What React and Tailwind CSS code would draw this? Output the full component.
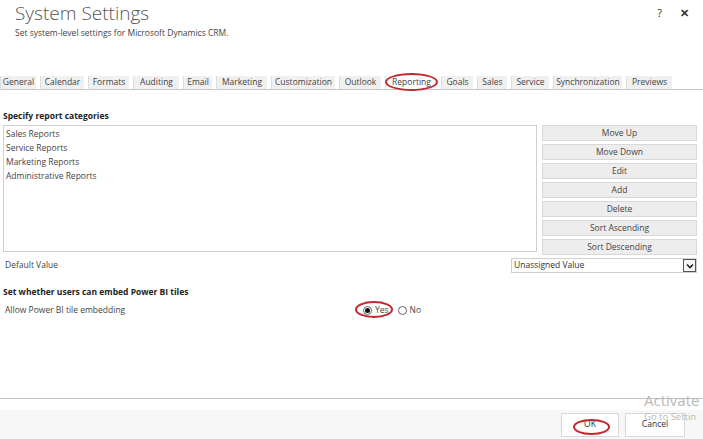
import React from 'react';

const font = { fontFamily: '"Open Sans", "Noto Sans", sans-serif' };

// tab widths measured from the reference
const tabs = [
  { label: 'General', w: 'w-[36px]' },
  { label: 'Calendar', w: 'w-[44px]' },
  { label: 'Formats', w: 'w-[41px]' },
  { label: 'Auditing', w: 'w-[46px]' },
  { label: 'Email', w: 'w-[29px]' },
  { label: 'Marketing', w: 'w-[51px]' },
  { label: 'Customization', w: 'w-[64px]' },
  { label: 'Outlook', w: 'w-[42px]' },
  { label: 'Reporting', w: 'w-[52px]', active: true },
  { label: 'Goals', w: 'w-[32px]' },
  { label: 'Sales', w: 'w-[30px]' },
  { label: 'Service', w: 'w-[38px]' },
  { label: 'Synchronization', w: 'w-[69px]' },
  { label: 'Previews', w: 'w-[46px]' },
];

const categories = ['Sales Reports', 'Service Reports', 'Marketing Reports', 'Administrative Reports'];
const actions = ['Move Up', 'Move Down', 'Edit', 'Add', 'Delete', 'Sort Ascending', 'Sort Descending'];

export default function App() {
  return (
    <div style={font} className="relative w-[703px] h-[439px] overflow-hidden bg-white text-[#444] flex flex-col">
      {/* header */}
      <div className="flex justify-between pl-[15px] pr-[14px]">
        <div>
          <div className="text-[19px] font-light leading-[26px] text-[#555]">System Settings</div>
          <div className="text-[8.5px] leading-[12px] text-[#444] mt-[1px]">Set system-level settings for Microsoft Dynamics CRM.</div>
        </div>
        <div className="flex gap-[18px] pt-[5px] text-[11px] text-[#333]">
          <span>?</span>
          <span className="font-semibold">✕</span>
        </div>
      </div>

      {/* tabs */}
      <div className="mt-[37px] flex gap-[4px] border-b border-[#c8c8c8] h-[14px]">
        {tabs.map((t) => (
          <div
            key={t.label}
            className={`${t.w} shrink-0 h-[13px] flex items-center justify-center text-[8.5px] leading-none text-[#444] border-l border-[#dcdcdc] ${t.active ? 'bg-white' : 'bg-[#f0f0f0]'}`}
          >
            {t.label}
          </div>
        ))}
      </div>

      {/* body */}
      <div className="pl-[3px] pr-[6px] pt-[20px] flex flex-col">
        <div className="text-[8.5px] font-bold text-[#222] leading-[12px]">Specify report categories</div>
        <div className="mt-[3px] flex gap-[5px]">
          <div className="flex-1 h-[127px] border border-[#d0d0d0] pl-[2px] pt-[1px]">
            {categories.map((c) => (
              <div key={c} className="text-[8.5px] leading-[14px] text-[#444]">{c}</div>
            ))}
          </div>
          <div className="w-[155px] flex flex-col gap-[3px]">
            {actions.map((a) => (
              <div key={a} className="h-[16px] bg-[#ededed] border border-[#d8d8d8] flex items-center justify-center text-[8.5px] text-[#444]">
                {a}
              </div>
            ))}
          </div>
        </div>

        <div className="mt-[3px] flex items-center justify-between pl-[2px]">
          <span className="text-[8.5px] text-[#444]">Default Value</span>
          <div className="w-[186px] h-[15px] border border-[#d0d0d0] flex items-center justify-between pl-[2px]">
            <span className="text-[8.5px] text-[#333]">Unassigned Value</span>
            <div className="w-[13px] h-[13px] border border-[#555] flex items-center justify-center bg-[#f4f4f4]">
              <svg width="8" height="6" viewBox="0 0 8 6"><path d="M1 1.5 L4 4.5 L7 1.5" fill="none" stroke="#222" strokeWidth="1.6" /></svg>
            </div>
          </div>
        </div>

        <div className="mt-[13px] text-[8.5px] font-bold text-[#222] leading-[12px]">Set whether users can embed Power BI tiles</div>
        <div className="mt-[6px] flex items-center">
          <span className="w-[360px] pl-[2px] text-[8.5px] text-[#444]">Allow Power BI tile embedding</span>
          <label className="flex items-center gap-[3px] text-[8.5px] text-[#444]">
            <span className="w-[9px] h-[9px] rounded-full border border-[#666] flex items-center justify-center">
              <span className="w-[5px] h-[5px] rounded-full bg-[#111]" />
            </span>
            Yes
          </label>
          <label className="ml-[9px] flex items-center gap-[3px] text-[8.5px] text-[#444]">
            <span className="w-[9px] h-[9px] rounded-full border border-[#666]" />
            No
          </label>
        </div>
      </div>

      {/* footer */}
      <div className="mt-auto">
        <div className="border-t border-[#c4c4c4]" />
        <div className="mt-[11px] h-[29px] bg-[#f7f7f7] flex justify-end items-center gap-[6px] pr-[18px]">
          <div className="w-[58px] h-[24px] bg-white border border-[#d8d8d8] flex items-center justify-center text-[8.5px] text-[#333]">OK</div>
          <div className="w-[60px] h-[24px] bg-white border border-[#d8d8d8] flex items-center justify-center text-[8.5px] text-[#333]">Cancel</div>
        </div>
      </div>

      {/* red highlight marks */}
      <div className="absolute left-[385px] top-[73px] w-[53px] h-[18px] rounded-[50%] border-2 border-[#c0282e]" />
      <div className="absolute left-[355px] top-[301px] w-[38px] h-[17px] rounded-[50%] border-2 border-[#c0282e]" />
      <div className="absolute left-[573px] top-[419px] w-[37px] h-[16px] rounded-[50%] border-2 border-[#c0282e]" />

      {/* windows activation watermark */}
      <div className="absolute left-[644px] top-[393px] text-[15px] leading-none text-[#b8b8b8] whitespace-nowrap">Activate W</div>
      <div className="absolute left-[644px] top-[412px] text-[9.5px] leading-none text-[#b8b8b8] whitespace-nowrap">Go to Settin</div>
    </div>
  );
}
